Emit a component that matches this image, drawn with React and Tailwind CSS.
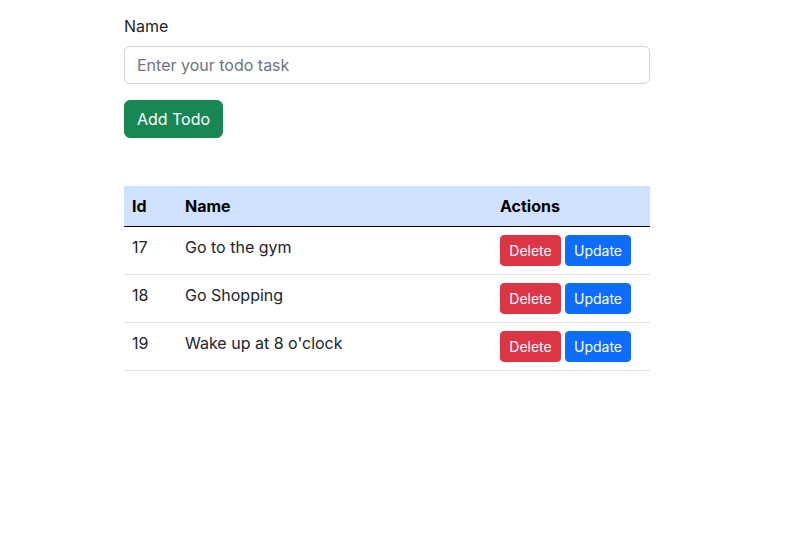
const todos = [
  { id: 17, name: "Go to the gym" },
  { id: 18, name: "Go Shopping" },
  { id: 19, name: "Wake up at 8 o'clock" },
];

export default function App() {
  return (
    <div className="min-h-[548px] bg-white text-[#212529] font-['Inter',sans-serif] text-base leading-6">
      <div className="ml-[124px] w-[526px] pt-[14px]">
        <label className="block mb-2">Name</label>
        <input
          type="text"
          placeholder="Enter your todo task"
          className="block w-full h-[38px] px-3 py-[6px] rounded-[6px] border border-[#ced4da] placeholder:text-[#6c757d] outline-none"
        />
        <button
          type="button"
          className="mt-4 h-[38px] w-[99px] rounded-[6px] border border-[#198754] bg-[#198754] text-white"
        >
          Add Todo
        </button>

        <table className="mt-12 w-full border-collapse text-left">
          <thead>
            <tr className="bg-[#cfe2ff] border-b border-black">
              <th className="w-[53px] p-2 font-bold text-black">Id</th>
              <th className="p-2 font-bold text-black">Name</th>
              <th className="w-[158px] p-2 font-bold text-black">Actions</th>
            </tr>
          </thead>
          <tbody>
            {todos.map((t) => (
              <tr key={t.id} className="border-b border-[#dee2e6] align-top">
                <td className="p-2">{t.id}</td>
                <td className="p-2">{t.name}</td>
                <td className="p-2">
                  <div className="flex gap-1">
                    <button
                      type="button"
                      className="h-[31px] w-[61px] rounded-[4px] border border-[#dc3545] bg-[#dc3545] text-white text-sm"
                    >
                      Delete
                    </button>
                    <button
                      type="button"
                      className="h-[31px] w-[66px] rounded-[4px] border border-[#0d6efd] bg-[#0d6efd] text-white text-sm"
                    >
                      Update
                    </button>
                  </div>
                </td>
              </tr>
            ))}
          </tbody>
        </table>
      </div>
    </div>
  );
}
